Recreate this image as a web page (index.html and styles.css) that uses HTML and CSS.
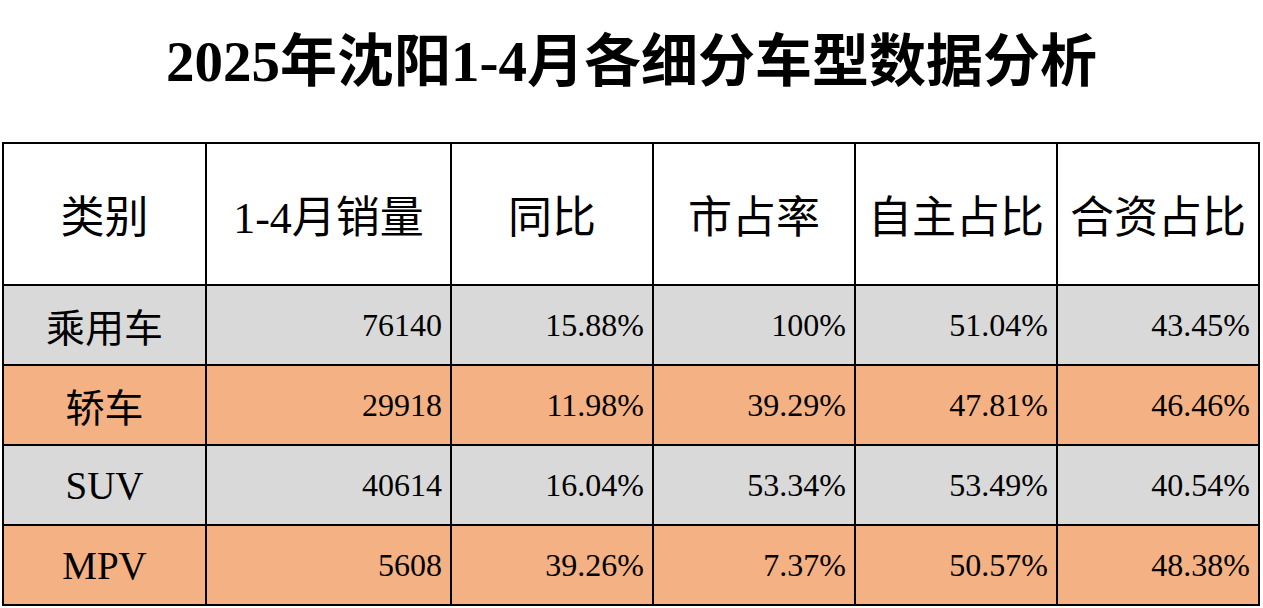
FILE: index.html
```html
<!DOCTYPE html>
<html lang="zh-CN">
<head>
<meta charset="utf-8">
<title>2025年沈阳1-4月各细分车型数据分析</title>
<link rel="stylesheet" href="styles.css">
</head>
<body>
<div class="page">
  <h1 class="title">2025年沈阳1-4月各细分车型数据分析</h1>
  <table class="data">
    <colgroup>
      <col class="c1"><col class="c2"><col class="c3"><col class="c4"><col class="c5"><col class="c6">
    </colgroup>
    <thead>
      <tr><th>类别</th><th>1-4月销量</th><th>同比</th><th>市占率</th><th>自主占比</th><th>合资占比</th></tr>
    </thead>
    <tbody>
      <tr class="gray"><td class="cat">乘用车</td><td>76140</td><td>15.88%</td><td>100%</td><td>51.04%</td><td>43.45%</td></tr>
      <tr class="orange"><td class="cat">轿车</td><td>29918</td><td>11.98%</td><td>39.29%</td><td>47.81%</td><td>46.46%</td></tr>
      <tr class="gray"><td class="cat">SUV</td><td>40614</td><td>16.04%</td><td>53.34%</td><td>53.49%</td><td>40.54%</td></tr>
      <tr class="orange"><td class="cat">MPV</td><td>5608</td><td>39.26%</td><td>7.37%</td><td>50.57%</td><td>48.38%</td></tr>
    </tbody>
  </table>
</div>
</body>
</html>
```
FILE: styles.css
```css
html, body {
  margin: 0;
  padding: 0;
  background: #ffffff;
}
.page {
  width: 1263px;
  height: 608px;
  overflow: hidden;
  font-family: "Liberation Serif", "Noto Sans CJK SC", serif;
  color: #000;
}
.title {
  margin: 0;
  height: 142px;
  box-sizing: border-box;
  padding-top: 32px;
  font-size: 57px;
  line-height: 60px;
  font-weight: 700;
  text-align: center;
}
.data {
  margin-left: 2px;
  width: 1256px;
  border-collapse: collapse;
  table-layout: fixed;
}
.c1 { width: 203px; }
.c2 { width: 245px; }
.c3 { width: 202px; }
.c4 { width: 202px; }
.c5 { width: 202px; }
.c6 { width: 202px; }
.data th, .data td {
  border: 2px solid #000;
  padding: 0 8px 0 0;
  white-space: nowrap;
  overflow: hidden;
}
.data th {
  height: 140px;
  font-size: 44px;
  font-weight: 400;
  text-align: center;
  padding: 0;
}
.data td {
  height: 78px;
  font-size: 32px;
  text-align: right;
}
.data td.cat {
  text-align: center;
  font-size: 39px;
  padding: 0;
}
.gray td { background: #d9d9d9; }
.orange td { background: #f4b183; }
```
